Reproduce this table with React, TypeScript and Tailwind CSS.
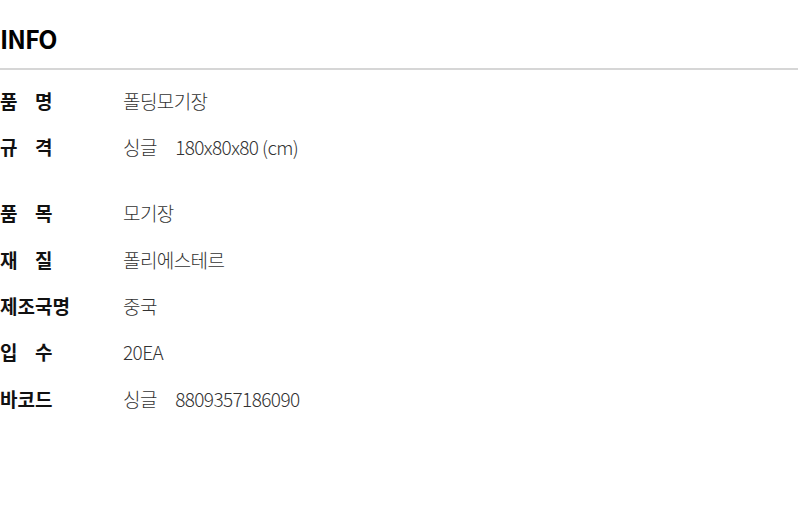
const rows: { label: string[]; value: string; gap?: boolean }[] = [
  { label: ["품", "명"], value: "폴딩모기장" },
  { label: ["규", "격"], value: "싱글\u2003180x80x80 (cm)" },
  { label: ["품", "목"], value: "모기장", gap: true },
  { label: ["재", "질"], value: "폴리에스테르" },
  { label: ["제조국명"], value: "중국" },
  { label: ["입", "수"], value: "20EA" },
  { label: ["바코드"], value: "싱글\u20038809357186090" },
];

export default function App() {
  return (
    <div
      className="w-[800px] h-[518px] bg-white text-[#111]"
      style={{ fontFamily: '"Noto Sans CJK KR", "Noto Sans", sans-serif' }}
    >
      <div className="w-[798px]">
        <h1 className="pt-[20px] h-[68px] text-[25px] font-bold leading-[36px] tracking-[-1px] text-black">INFO</h1>
        <div className="h-[2px] bg-[#d6d6d6]" />
        <div className="pt-[8px]">
          {rows.map((r, i) => (
            <div key={i} className={`flex items-center h-[46.3px] ${r.gap ? "mt-[20px]" : ""}`}>
              <div className="w-[123px] flex text-[19px] font-bold text-[#111]">
                {r.label.length === 2 ? (
                  <>
                    <span className="w-[35px]">{r.label[0]}</span>
                    <span>{r.label[1]}</span>
                  </>
                ) : (
                  <span>{r.label[0]}</span>
                )}
              </div>
              <div className="text-[19px] font-light text-[#333] tracking-[-0.6px]">{r.value}</div>
            </div>
          ))}
        </div>
      </div>
    </div>
  );
}
